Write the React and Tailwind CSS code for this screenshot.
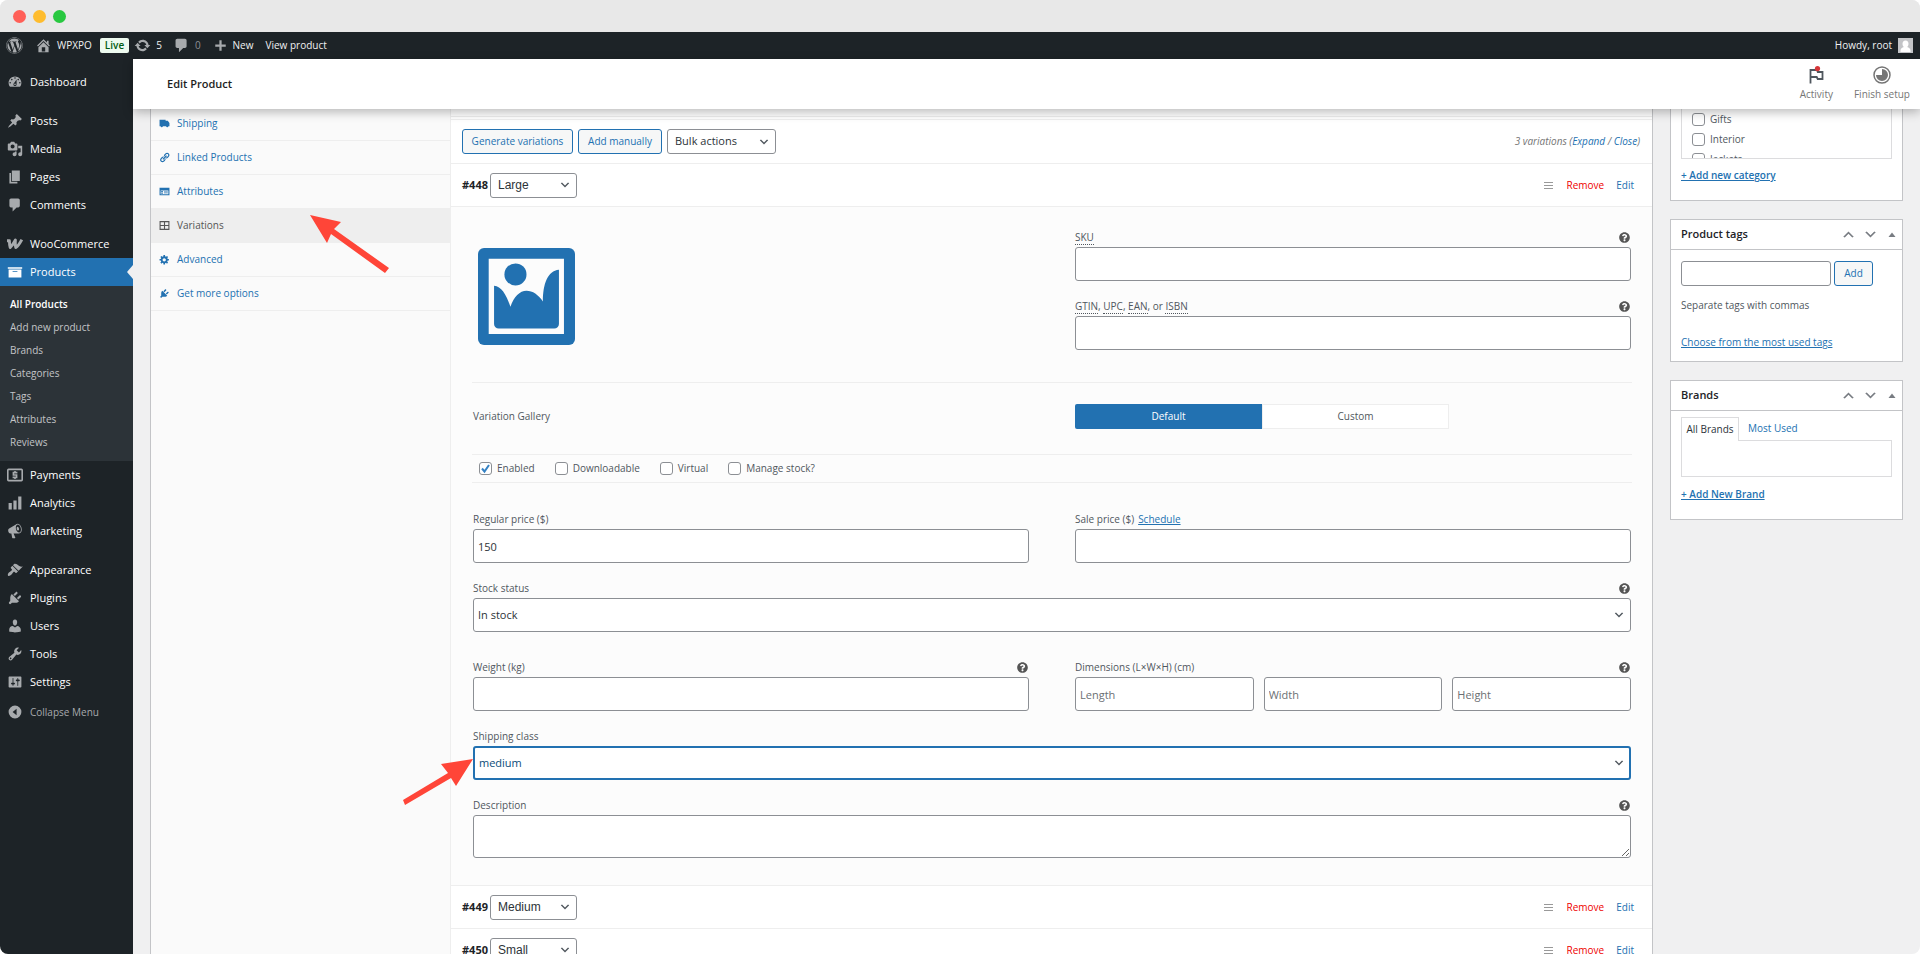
import React, { useId } from 'react';
import { FaWordpress, FaQuestionCircle } from 'react-icons/fa';

// 20x20 admin icon paths
const ICONS = {
  dashboard:
    'M3.76 16h12.48c1.1-1.37 1.76-3.11 1.76-5 0-4.42-3.58-8-8-8s-8 3.58-8 8c0 1.89.66 3.63 1.76 5zM10 4c.55 0 1 .45 1 1s-.45 1-1 1-1-.45-1-1 .45-1 1-1zM6 6c.55 0 1 .45 1 1s-.45 1-1 1-1-.45-1-1 .45-1 1-1zm8 0c.55 0 1 .45 1 1s-.45 1-1 1-1-.45-1-1 .45-1 1-1zm-5.37 5.55L12 7v6c0 1.1-.9 2-2 2s-2-.9-2-2c0-.57.24-1.08.63-1.45zM4 10c.55 0 1 .45 1 1s-.45 1-1 1-1-.45-1-1 .45-1 1-1zm12 0c.55 0 1 .45 1 1s-.45 1-1 1-1-.45-1-1 .45-1 1-1zm-5 3c0-.55-.45-1-1-1s-1 .45-1 1 .45 1 1 1 1-.45 1-1z',
  post: 'M10.44 3.02l1.82-1.82 6.36 6.35-1.83 1.82c-1.05-.68-2.48-.57-3.41.36l-.75.75c-.92.93-1.04 2.35-.35 3.41l-1.83 1.82-2.41-2.41-2.8 2.79c-.42.42-3.38 2.71-3.8 2.29s1.86-3.39 2.28-3.81l2.79-2.79L4.1 9.36l1.83-1.82c1.05.69 2.48.57 3.4-.36l.75-.75c.93-.92 1.05-2.35.36-3.41z',
  media:
    'M13 11V4c0-.55-.45-1-1-1h-1.67L9 1H5L3.67 3H2c-.55 0-1 .45-1 1v7c0 .55.45 1 1 1h10c.55 0 1-.45 1-1zM7 4.5c1.38 0 2.5 1.12 2.5 2.5S8.38 9.5 7 9.5 4.5 8.38 4.5 7 5.62 4.5 7 4.5zM14 6h5v10.5c0 1.38-1.12 2.5-2.5 2.5S14 17.88 14 16.5s1.12-2.5 2.5-2.5c.17 0 .34.02.5.05V9h-3V6zm-4 8.05V13h2v3.5c0 1.38-1.12 2.5-2.5 2.5S7 17.88 7 16.5 8.12 14 9.5 14c.17 0 .34.02.5.05z',
  page: 'M6 15V2h10v13H6zm-1 1h8v2H3V5h2v11z',
  comment:
    'M5 2h9c1.1 0 2 .9 2 2v7c0 1.1-.9 2-2 2h-2l-5 5v-5H5c-1.1 0-2-.9-2-2V4c0-1.1.9-2 2-2z',
  archive: 'M19 4v2H1V4h18zM2 7h16v10H2V7zm11 3V9H7v1h6z',
  chart: 'M18 18V2h-4v16h4zm-6 0V7H8v11h4zm-6 0v-8H2v8h4z',
  megaphone:
    'M18.15 5.94c.46 1.62.38 3.22-.02 4.48-.42 1.28-1.26 2.18-2.3 2.48-.16.06-.26.06-.4.06-.06.02-.12.02-.18.02-.06.02-.14.02-.22.02h-6.8l2.22 5.5c.02.14-.06.26-.14.34-.08.1-.24.16-.34.16H6.95c-.1 0-.26-.06-.34-.16-.08-.08-.16-.2-.14-.34l-1-5.5H4.25l-.02-.02c-.5.06-1.08-.18-1.54-.62s-.88-1.08-1.06-1.88c-.24-.8-.2-1.56-.02-2.2.18-.62.58-1.08 1.06-1.3l.02-.02 9-5.4c.1-.06.18-.1.24-.16.06-.04.14-.08.24-.12.16-.08.28-.12.5-.18 1.04-.3 2.24.1 3.22.98s1.84 2.24 2.26 3.86zm-2.58 5.98h-.02c.4-.1.74-.34 1.04-.7.58-.7.86-1.76.86-3.04 0-.64-.1-1.3-.28-1.98-.34-1.36-1.02-2.5-1.78-3.24s-1.68-1.1-2.46-.88c-.82.22-1.4.96-1.7 2-.32 1.04-.28 2.36.06 3.72.38 1.36 1 2.5 1.8 3.24.78.74 1.62 1.1 2.48.88zm-2.54-7.08c.22-.04.42-.02.62.04.38.16.76.48 1.02 1s.42 1.2.42 1.78c0 .3-.04.56-.12.8-.18.48-.44.84-.86.94-.34.1-.8-.06-1.14-.4s-.64-.86-.78-1.5c-.18-.62-.12-1.24.02-1.72s.48-.84.82-.94z',
  appearance:
    'M14.48 11.06L7.41 3.99l1.5-1.5c.5-.56 2.3-.47 3.51.32 1.21.8 1.43 1.28 2.91 2.1 1.18.64 2.45 1.26 4.45.85zm-.71.71L6.7 4.7 4.93 6.47c-.39.39-.39 1.02 0 1.41l1.06 1.06c.39.39.39 1.03 0 1.42-.6.6-1.43 1.11-2.21 1.69-.35.26-.7.53-1.01.84C1.43 14.23.4 16.08 1.4 17.07c.99 1 2.84-.03 4.18-1.36.31-.31.58-.66.85-1.02.57-.78 1.08-1.61 1.69-2.21.39-.39 1.02-.39 1.41 0l1.06 1.06c.39.39 1.02.39 1.41 0z',
  plugins:
    'M13.11 4.36L9.87 7.6 8 5.73l3.24-3.24c.35-.34 1.05-.2 1.56.32.52.51.66 1.21.31 1.55zm-8 1.77l.91-1.12 9.01 9.01-1.19.84c-.71.71-2.63 1.16-3.82 1.16H6.14L4.9 17.26c-.59.59-1.54.59-2.12 0-.59-.58-.59-1.53 0-2.12l1.24-1.24v-3.88c0-1.13.4-3.19 1.09-3.89zm7.26 3.97l3.24-3.24c.34-.35 1.04-.21 1.55.31.52.51.66 1.21.31 1.55l-3.24 3.25z',
  users:
    'M10 9.25c-2.27 0-2.73-3.44-2.73-3.44C7 4.02 7.82 2 9.97 2c2.16 0 2.98 2.02 2.71 3.81 0 0-.41 3.44-2.68 3.44zm0 2.57L12.72 10c2.39 0 4.52 2.33 4.52 4.53v2.49s-3.65 1.13-7.24 1.13c-3.65 0-7.24-1.13-7.24-1.13v-2.49c0-2.25 1.94-4.48 4.47-4.48z',
  tools:
    'M16.68 9.77c-1.34 1.34-3.3 1.67-4.95.99l-5.41 6.52c-.99.99-2.59.99-3.58 0s-.99-2.59 0-3.57l6.52-5.42c-.68-1.65-.35-3.61.99-4.95 1.28-1.28 3.12-1.62 4.72-1.06l-2.89 2.89 2.82 2.82 2.86-2.87c.53 1.58.18 3.39-1.08 4.65zM3.81 16.21c.4.39 1.04.39 1.43 0 .4-.4.4-1.04 0-1.43-.39-.4-1.03-.4-1.43 0-.39.39-.39 1.03 0 1.43z',
  settings:
    'M18 16V4c0-.55-.45-1-1-1H3c-.55 0-1 .45-1 1v12c0 .55.45 1 1 1h14c.55 0 1-.45 1-1zM8 11h1c.55 0 1 .45 1 1s-.45 1-1 1H8v1.5c0 .28-.22.5-.5.5s-.5-.22-.5-.5V13H6c-.55 0-1-.45-1-1s.45-1 1-1h1V5.5c0-.28.22-.5.5-.5s.5.22.5.5V11zm5-2h-1c-.55 0-1-.45-1-1s.45-1 1-1h1V5.5c0-.28.22-.5.5-.5s.5.22.5.5V7h1c.55 0 1 .45 1 1s-.45 1-1 1h-1v5.5c0 .28-.22.5-.5.5s-.5-.22-.5-.5V9z',
  collapse: 'M10 2a8 8 0 1 0 0 16 8 8 0 0 0 0-16zm2 4v8l-5-4z',
  home: 'M16 8.5l1.53 1.53-1.06 1.06L10 4.6l-6.47 6.49-1.06-1.06L10 2.5l4 4v-2h2v4zm-6-2.46l6 5.99V18H4v-5.97zM12 17v-5H8v5h4z',
  update:
    'M10.2 3.28c3.53 0 6.43 2.61 6.92 6h2.08l-3.5 4-3.5-4h2.32c-.45-1.97-2.21-3.45-4.32-3.45-1.45 0-2.73.71-3.54 1.78L4.95 5.66C6.23 4.2 8.11 3.28 10.2 3.28zm-.4 13.44c-3.52 0-6.43-2.61-6.92-6H.8l3.5-4c1.17 1.33 2.33 2.67 3.5 4H5.48c.45 1.97 2.21 3.45 4.32 3.45 1.45 0 2.73-.71 3.54-1.78l1.71 1.95c-1.28 1.46-3.15 2.38-5.25 2.38z',
  plus: 'M17 8.5v3h-5.500v5.500h-3v-5.500H3v-3h5.500V3h3v5.500z',
  links:
    'M17.74 2.76c1.68 1.69 1.68 4.41 0 6.1l-1.53 1.52c-1.12 1.12-2.7 1.47-4.14 1.09l2.62-2.61.76-.77.76-.76c.84-.84.84-2.2 0-3.04-.84-.85-2.2-.85-3.04 0l-.77.76-3.38 3.38c-.37-1.44-.02-3.02 1.1-4.14l1.52-1.53c1.69-1.68 4.42-1.68 6.1 0zM8.59 13.43l5.34-5.34c.42-.42.42-1.1 0-1.52-.44-.43-1.13-.39-1.53 0l-5.33 5.34c-.42.42-.42 1.1 0 1.52.44.43 1.13.39 1.52 0zm-.76 2.29l4.14-4.15c.38 1.44.03 3.02-1.09 4.14l-1.52 1.53c-1.69 1.68-4.41 1.68-6.1 0-1.68-1.68-1.68-4.42 0-6.1l1.53-1.52c1.12-1.12 2.7-1.47 4.14-1.1l-4.14 4.15c-.85.84-.85 2.2 0 3.05.84.84 2.2.84 3.04 0z',
  gear: 'M18 12h-2.18c-.17.7-.44 1.35-.81 1.93l1.54 1.54-2.1 2.1-1.54-1.54c-.58.36-1.23.63-1.91.79V19H8v-2.18c-.68-.16-1.33-.43-1.91-.79l-1.54 1.54-2.12-2.12 1.54-1.54c-.36-.58-.63-1.23-.79-1.91H1V9.03h2.17c.16-.7.44-1.35.8-1.94L2.43 5.55l2.1-2.1 1.54 1.54c.58-.37 1.24-.64 1.93-.81V2h3v2.180c.68.16 1.33.43 1.91.79l1.54-1.54 2.12 2.12-1.54 1.54c.36.59.64 1.24.8 1.94H18V12zm-8.500 1.500c1.660 0 3-1.340 3-3s-1.340-3-3-3-3 1.340-3 3 1.340 3 3 3z',
  truck: 'M1 3h11v2h4l3 4v6h-2a2 2 0 0 1-4 0H7a2 2 0 0 1-4 0H1z',
  form: 'M1 3h18v14H1zM3 8v7h14V8zm1 1h3v2H4zm5 0h7v1H9zm-5 3h3v2H4zm5 0h7v1H9z',
  grid: 'M1 2h18v16H1zM3 4v5h6V4zm8 0v5h6V4zM3 11v5h6v-5zm8 0v5h6v-5z',
  money:
    'M2 2h16a2 2 0 0 1 2 2v12a2 2 0 0 1-2 2H2a2 2 0 0 1-2-2V4a2 2 0 0 1 2-2zm0 2v12h16V4zM9 5h2v1h2v2H9v1h4v5h-2v1H9v-1H7v-2h4v-1H7V6h2z',
  up: 'M15 14l-5-5-5 5-2-1 7-7 7 7z',
  down: 'M5 6l5 5 5-5 2 1-7 7-7-7z',
  triangle: 'M10 5l7 9H3z',
};

function Icon({ name, className }) {
  return (
    <svg viewBox="0 0 20 20" fill="currentColor" fillRule="evenodd" aria-hidden="true" className={className}>
      <path d={ICONS[name]} />
    </svg>
  );
}

function WooIcon({ className }) {
  return (
    <svg viewBox="0 0 20 20" fill="none" stroke="currentColor" strokeWidth="3.600" strokeLinejoin="round" aria-hidden="true" className={className}>
      <path d="M0 6h3c0 3 .3 6 1 8.500C6.500 12 8.500 9 10.500 5c-.3 4-.2 7 .5 9.500C13.500 13 16 9 18.500 4.500" />
    </svg>
  );
}

const MENU = [
  [{ icon: 'dashboard', label: 'Dashboard' }],
  [
    { icon: 'post', label: 'Posts' },
    { icon: 'media', label: 'Media' },
    { icon: 'page', label: 'Pages' },
    { icon: 'comment', label: 'Comments' },
  ],
  [
    { icon: 'woo', label: 'WooCommerce' },
    {
      icon: 'archive',
      label: 'Products',
      active: true,
      children: ['All Products', 'Add new product', 'Brands', 'Categories', 'Tags', 'Attributes', 'Reviews'],
    },
    { icon: 'money', label: 'Payments' },
    { icon: 'chart', label: 'Analytics' },
    { icon: 'megaphone', label: 'Marketing' },
  ],
  [
    { icon: 'appearance', label: 'Appearance' },
    { icon: 'plugins', label: 'Plugins' },
    { icon: 'users', label: 'Users' },
    { icon: 'tools', label: 'Tools' },
    { icon: 'settings', label: 'Settings' },
  ],
];

const TABS = [
  { icon: 'truck', label: 'Shipping' },
  { icon: 'links', label: 'Linked Products' },
  { icon: 'form', label: 'Attributes' },
  { icon: 'grid', label: 'Variations', active: true },
  { icon: 'gear', label: 'Advanced' },
  { icon: 'plugins', label: 'Get more options' },
];

function MenuItem({ item }) {
  return (
    <li>
      <a
        href="#"
        className={`relative flex h-7 items-center gap-[7px] pl-[7px] text-[11px] text-white ${item.active ? 'bg-[#2271b1]' : ''}`}
      >
        {item.icon === 'woo' ? (
          <WooIcon className="size-4 text-[#a7aaad]" />
        ) : (
          <Icon name={item.icon} className={`size-4 ${item.active ? 'text-white' : 'text-[#a7aaad]'}`} />
        )}
        {item.label}
        {item.active && (
          <span className="absolute top-[7px] right-0 border-y-[7px] border-r-[6px] border-y-transparent border-r-[#f0f0f1]" />
        )}
      </a>
      {item.children && (
        <ul className="bg-[#2c3338] py-[7px]">
          {item.children.map((child, i) => (
            <li key={child}>
              <a
                href="#"
                className={`flex h-[23px] items-center pl-[10px] text-[10px] ${i === 0 ? 'font-semibold text-white' : 'text-[#c3c4c7]'}`}
              >
                {child}
              </a>
            </li>
          ))}
        </ul>
      )}
    </li>
  );
}

function Sidebar() {
  return (
    <nav className="w-[133px] shrink-0 bg-[#1d2327] pt-[9px]">
      <div className="flex flex-col gap-[11px]">
        {MENU.map((group, i) => (
          <ul key={i}>
            {group.map((item) => (
              <MenuItem key={item.label} item={item} />
            ))}
          </ul>
        ))}
      </div>
      <button type="button" className="flex h-8 items-center gap-[7px] pl-[7px] text-[10px] text-[#a7aaad]">
        <Icon name="collapse" className="size-4" />
        Collapse Menu
      </button>
    </nav>
  );
}

function AdminBar() {
  return (
    <div className="flex h-[27px] shrink-0 items-center bg-[#1d2327] pr-[7px] pl-[6px] text-[10px] text-[#f0f0f1]">
      <FaWordpress className="size-[17px] text-[#a7aaad]" />
      <a href="#" className="ml-3 flex items-center gap-[5px]">
        <Icon name="home" className="size-[17px] text-[#a7aaad]" />
        WPXPO
      </a>
      <span className="ml-2 rounded-xs bg-[#edfaef] px-[5px] leading-[15px] font-semibold text-[#005c12]">Live</span>
      <a href="#" className="ml-[5px] flex items-center gap-[5px]">
        <Icon name="update" className="size-[17px] text-[#a7aaad]" />5
      </a>
      <a href="#" className="ml-[11px] flex items-center gap-[5px] text-[#8c8f94]">
        <Icon name="comment" className="size-[17px] text-[#a7aaad]" />0
      </a>
      <a href="#" className="ml-3 flex items-center gap-[5px]">
        <Icon name="plus" className="size-[15px] text-[#a7aaad]" />
        New
      </a>
      <a href="#" className="ml-3">View product</a>
      <a href="#" className="ml-auto flex items-center gap-[6px]">
        Howdy, root
        <svg viewBox="0 0 15 15" className="size-[15px]" aria-hidden="true">
          <path fill="#c3c4c7" d="M0 0h15v15H0z" />
          <path fill="#fff" d="M7.500 2.500c2 0 3 1.500 3 3.300 0 1.500-.6 2.600-1.400 3.200 1.800.6 3.400 1.500 3.400 3.500V14h-10v-1.500c0-2 1.600-2.900 3.400-3.500-.8-.6-1.400-1.700-1.400-3.200 0-1.800 1-3.300 3-3.300z" />
        </svg>
      </a>
    </div>
  );
}

function PageHeader() {
  return (
    <header className="z-10 flex h-[50px] shrink-0 items-center justify-between bg-white pr-[10px] pl-[34px] shadow-[0_3px_10px_rgba(0,0,0,0.28)]">
      <h1 className="text-[11px] font-semibold text-[#1e1e1e]">Edit Product</h1>
      <div className="flex gap-[21px] text-[10px] leading-4 text-[#757575]">
        <button type="button" className="flex flex-col items-center gap-0.5">
          <svg viewBox="0 0 18 18" className="size-[18px]" fill="none" aria-hidden="true">
            <path d="M3.500 17.500V4h6.500l.8 2h4.700v7h-4.800l-1-2H3.500" stroke="#50575e" strokeWidth="1.800" />
            <circle cx="10.500" cy="2.600" r="2.600" fill="#d63638" />
          </svg>
          Activity
        </button>
        <button type="button" className="flex flex-col items-center gap-0.5">
          <svg viewBox="0 0 18 18" className="size-[18px]" fill="none" aria-hidden="true">
            <circle cx="9" cy="9" r="8" stroke="#757575" strokeWidth="1.500" />
            <path d="M9 3v6H3a6 6 0 1 0 6-6z" fill="#757575" />
          </svg>
          Finish setup
        </button>
      </div>
    </header>
  );
}

function Help() {
  return <FaQuestionCircle className="size-[11px] text-[#555]" />;
}

function Select({ id, label, value, className = '', focused, large }) {
  return (
    <div className={`relative flex ${className}`}>
      <select
        id={id}
        aria-label={label}
        defaultValue={value}
        className={`w-full appearance-none rounded-[3px] bg-white outline-none ${large ? 'h-[34px] pl-1' : 'h-[25px] pl-[7px]'} ${
          focused ? 'border-2 border-[#2271b1] text-[#0a4b78]' : 'border border-[#8c8f94] text-[#2c3338]'
        }`}
      >
        <option>{value}</option>
      </select>
      <Icon name="down" className="pointer-events-none absolute top-1/2 right-[6px] size-3 -translate-y-1/2 text-[#50575e]" />
    </div>
  );
}

function Field({ label, help, link, value, placeholder, type = 'text', focused }) {
  const id = useId();
  return (
    <div>
      <div className="flex h-5 items-center justify-between pr-px text-[10px] text-[#50575e]">
        <div>
          <label htmlFor={id}>{label}</label>
          {link && (
            <a href="#" className="ml-1 text-[#2271b1] underline">
              {link}
            </a>
          )}
        </div>
        {help && <Help />}
      </div>
      {type === 'select' && <Select id={id} value={value} focused={focused} large className="text-[11px]" />}
      {type === 'textarea' && (
        <textarea id={id} className="block h-[43px] w-full resize-y rounded-[3px] border border-[#8c8f94] bg-white" />
      )}
      {type === 'text' && (
        <input
          id={id}
          type="text"
          defaultValue={value}
          placeholder={placeholder}
          className="block h-[34px] w-full rounded-[3px] border border-[#8c8f94] bg-white px-1 text-[11px] text-[#2c3338] placeholder:text-[#6b6f73]"
        />
      )}
    </div>
  );
}

function DimensionsField() {
  const id = useId();
  return (
    <div>
      <div className="flex h-5 items-center justify-between pr-px text-[10px] text-[#50575e]">
        <label htmlFor={id}>Dimensions (L×W×H) (cm)</label>
        <Help />
      </div>
      <div className="grid grid-cols-3 gap-[10px]">
        {['Length', 'Width', 'Height'].map((name, i) => (
          <input
            key={name}
            id={i === 0 ? id : undefined}
            aria-label={name}
            placeholder={name}
            className="h-[34px] min-w-0 rounded-[3px] border border-[#8c8f94] bg-white px-1 text-[11px] placeholder:text-[#6b6f73]"
          />
        ))}
      </div>
    </div>
  );
}

function Checkbox({ label, checked }) {
  return (
    <label className="flex items-center gap-[5px]">
      <span className="relative flex">
        <input
          type="checkbox"
          defaultChecked={checked}
          className="size-[13px] appearance-none rounded-[3px] border border-[#8c8f94] bg-white"
        />
        {checked && (
          <svg viewBox="0 0 13 13" className="pointer-events-none absolute inset-0 size-[13px]" fill="none" aria-hidden="true">
            <path d="M3 6.500l2.500 3L10 3" stroke="#3582c4" strokeWidth="2" />
          </svg>
        )}
      </span>
      {label}
    </label>
  );
}

function VariationRow({ id, value }) {
  return (
    <div className="flex h-[43px] items-center border-b border-[#eee] bg-white pr-[18px] pl-[11px]">
      <strong className="w-7 text-[11px] text-[#1d2327]">#{id}</strong>
      <Select label={`Size for #${id}`} value={value} className='w-[87px] font-["Liberation_Sans",sans-serif] text-xs' />
      <div className="ml-auto flex items-center text-[10px]">
        <span className="flex w-[9px] flex-col gap-0.5">
          <span className="h-px bg-[#999]" />
          <span className="h-px bg-[#999]" />
          <span className="h-px bg-[#999]" />
        </span>
        <a href="#" className="ml-[14px] text-[#e00]">Remove</a>
        <a href="#" className="ml-3 text-[#2271b1]">Edit</a>
      </div>
    </div>
  );
}

function Abbr({ children }) {
  return <abbr className="border-b border-dotted border-[#50575e] leading-3">{children}</abbr>;
}

function ImagePlaceholder() {
  return (
    <svg viewBox="0 0 290 290" className="size-[97px]" aria-hidden="true">
      <rect width="290" height="290" rx="18" fill="#2271b1" />
      <path d="M32 32h225v225H32z" fill="#fcfcfc" />
      <g fill="#2271b1">
        <circle cx="112" cy="79" r="33" />
        <path d="M48 113c22 2 37 27 49 63 10-30 28-48 48-48 18 0 36 12 49 32 0-52 14-92 48-95v162a14 14 0 0 1-14 14H62a14 14 0 0 1-14-14z" />
      </g>
    </svg>
  );
}

function VariationDetails() {
  return (
    <div className="border-b border-[#eee] bg-[#fcfcfc] pr-5 pb-[27px] pl-[21px]">
      <div className="grid grid-cols-2 gap-x-[46px] border-b border-[#eee] px-px pt-5 pb-8">
        <div className="pt-[21px] pl-[5px]">
          <button type="button" aria-label="Upload image" className="block">
            <ImagePlaceholder />
          </button>
        </div>
        <div className="flex flex-col gap-[15px]">
          <Field label={<Abbr>SKU</Abbr>} help />
          <Field
            label={
              <>
                <Abbr>GTIN</Abbr>, <Abbr>UPC</Abbr>, <Abbr>EAN</Abbr>, or <Abbr>ISBN</Abbr>
              </>
            }
            help
          />
        </div>
      </div>

      <div className="grid grid-cols-2 items-center gap-x-[46px] border-b border-[#eee] px-px pt-[21px] pb-[25px] text-[10px] text-[#50575e]">
        <span className="font-medium">Variation Gallery</span>
        <div className="flex">
          <button type="button" className="h-[25px] w-[187px] rounded-l-xs bg-[#2271b1] text-white">
            Default
          </button>
          <button type="button" className="h-[25px] w-[187px] border border-[#eee] bg-white">
            Custom
          </button>
        </div>
      </div>

      <div className="flex h-7 items-center gap-5 border-b border-[#eee] pl-[7px] text-[10px] text-[#50575e]">
        <Checkbox label="Enabled" checked />
        <Checkbox label="Downloadable" />
        <Checkbox label="Virtual" />
        <Checkbox label="Manage stock?" />
      </div>

      <div className="flex flex-col gap-[15px] px-px pt-[26px]">
        <div className="grid grid-cols-2 gap-x-[46px]">
          <Field label="Regular price ($)" value="150" />
          <Field label="Sale price ($)" link="Schedule" />
        </div>
        <Field type="select" label="Stock status" value="In stock" help />
        <div className="grid grid-cols-2 gap-x-[46px] pt-[10px]">
          <Field label="Weight (kg)" help />
          <DimensionsField />
        </div>
        <Field type="select" label="Shipping class" value="medium" focused />
        <Field type="textarea" label="Description" help />
      </div>
    </div>
  );
}

const outlineButton = 'h-[25px] rounded-[3px] border border-[#2271b1] bg-[#f6f7f7] text-[10px] text-[#2271b1]';

function ProductData() {
  return (
    <section className="relative flex min-w-0 flex-1 border-x border-[#c3c4c7] bg-white">
      <ul className="w-[299px] shrink-0 bg-[#fafafa] text-[10px]">
        {TABS.map((tab) => (
          <li key={tab.label} className={`border-b border-[#eee] ${tab.active ? 'bg-[#eee]' : ''}`}>
            <a
              href="#"
              className={`flex h-[33px] items-center gap-[7px] pl-2 ${tab.active ? 'text-[#555]' : 'text-[#2271b1]'}`}
            >
              <Icon name={tab.icon} className="size-[11px]" />
              {tab.label}
            </a>
          </li>
        ))}
      </ul>
      <div className="min-w-0 flex-1 border-l border-[#eee] pt-[9px]">
        <div className="h-1 border-y border-[#eee]" />
        <div className="flex h-11 items-center gap-[5px] border-b border-[#eee] pr-3 pl-[11px]">
          <button type="button" className={`${outlineButton} w-[111px]`}>Generate variations</button>
          <button type="button" className={`${outlineButton} w-[84px]`}>Add manually</button>
          <Select label="Bulk actions" value="Bulk actions" className="w-[109px] text-[11px]" />
          <p className="ml-auto text-[10px] text-[#757575] italic">
            3 variations (<a href="#" className="text-[#2271b1]">Expand</a> /{' '}
            <a href="#" className="text-[#2271b1]">Close</a>)
          </p>
        </div>
        <VariationRow id="448" value="Large" />
        <VariationDetails />
        <VariationRow id="449" value="Medium" />
        <VariationRow id="450" value="Small" />
      </div>

      {/* callout arrows drawn over the panel */}
      <svg viewBox="0 0 80 60" className="pointer-events-none absolute top-[108px] left-[158px] h-[60px] w-20" fill="#ff4538" aria-hidden="true">
        <path d="M1 0l31 7-7 7 55 39-4 5-54-39-4 9z" />
      </svg>
      <svg viewBox="0 0 72 48" className="pointer-events-none absolute top-[651px] left-[251px] h-12 w-[72px]" fill="#ff4538" aria-hidden="true">
        <path d="M71 1L54 28l-5-8L3 47l-2-5 45-27-7-9z" />
      </svg>
    </section>
  );
}

function MetaBox({ title, children }) {
  return (
    <section className="border border-[#c3c4c7] bg-white">
      <div className="flex h-[30px] items-center border-b border-[#c3c4c7] pr-[5px] pl-[10px] text-[#787c82]">
        <h2 className="text-[11px] font-semibold text-[#1d2327]">{title}</h2>
        <button type="button" aria-label="Move up" className="ml-auto"><Icon name="up" className="size-[15px]" /></button>
        <button type="button" aria-label="Move down" className="ml-[7px]"><Icon name="down" className="size-[15px]" /></button>
        <button type="button" aria-label="Toggle panel" className="ml-[9px]"><Icon name="triangle" className="size-[10px]" /></button>
      </div>
      {children}
    </section>
  );
}

function MetaBoxes() {
  return (
    <aside className="flex w-[233px] shrink-0 flex-col gap-[18px] text-[10px] text-[#50575e]">
      <section className="border border-t-0 border-[#c3c4c7] bg-white px-[10px] pb-[18px]">
        <div className="flex h-[50px] flex-col gap-[7px] overflow-hidden border border-t-0 border-[#dcdcde] pt-1 pl-[10px]">
          {['Gifts', 'Interior', 'Jackets'].map((name) => (
            <div key={name} className="flex h-[13px] shrink-0 items-center">
              <Checkbox label={name} />
            </div>
          ))}
        </div>
        <a href="#" className="mt-[9px] block leading-[14px] font-semibold text-[#2271b1] underline">+ Add new category</a>
      </section>

      <MetaBox title="Product tags">
        <div className="px-[10px] pt-[11px] pb-3">
          <div className="flex gap-[3px]">
            <input aria-label="Product tags" className="h-[25px] w-[150px] rounded-[3px] border border-[#8c8f94] px-1" />
            <button type="button" className={`${outlineButton} w-[39px]`}>Add</button>
          </div>
          <p className="mt-3 leading-[14px]">Separate tags with commas</p>
          <a href="#" className="mt-[23px] block leading-[14px] text-[#2271b1] underline">Choose from the most used tags</a>
        </div>
      </MetaBox>

      <MetaBox title="Brands">
        <div className="px-[10px] pt-[6px] pb-[18px]">
          <div className="flex">
            <button type="button" className="relative -mb-px h-6 w-[58px] border border-b-0 border-[#dcdcde] bg-white text-[#2c3338]">All Brands</button>
            <button type="button" className="ml-[9px] text-[#2271b1]">Most Used</button>
          </div>
          <div className="h-[37px] border border-[#dcdcde]" />
          <a href="#" className="mt-[10px] block leading-[14px] font-semibold text-[#2271b1] underline">+ Add New Brand</a>
        </div>
      </MetaBox>
    </aside>
  );
}

export default function App() {
  return (
    <div className='flex h-screen flex-col overflow-hidden rounded-lg bg-[#f0f0f1] font-["Open_Sans","Noto_Sans",sans-serif]'>
      <div className="flex h-8 shrink-0 items-center gap-[7px] bg-[#e8e8e8] pl-[13px]">
        <span className="size-[13px] rounded-full bg-[#ff5f57]" />
        <span className="size-[13px] rounded-full bg-[#febc2e]" />
        <span className="size-[13px] rounded-full bg-[#28c840]" />
      </div>
      <AdminBar />
      <div className="flex min-h-0 flex-1">
        <Sidebar />
        <div className="flex min-w-0 flex-1 flex-col">
          <PageHeader />
          {/* the form is scrolled a little under the sticky header */}
          <main className="flex min-h-0 flex-1 gap-[17px] overflow-hidden pr-[17px] pl-[17px]">
            <div className="-mt-[2px] flex min-w-0 flex-1">
              <ProductData />
            </div>
            <MetaBoxes />
          </main>
        </div>
      </div>
    </div>
  );
}
